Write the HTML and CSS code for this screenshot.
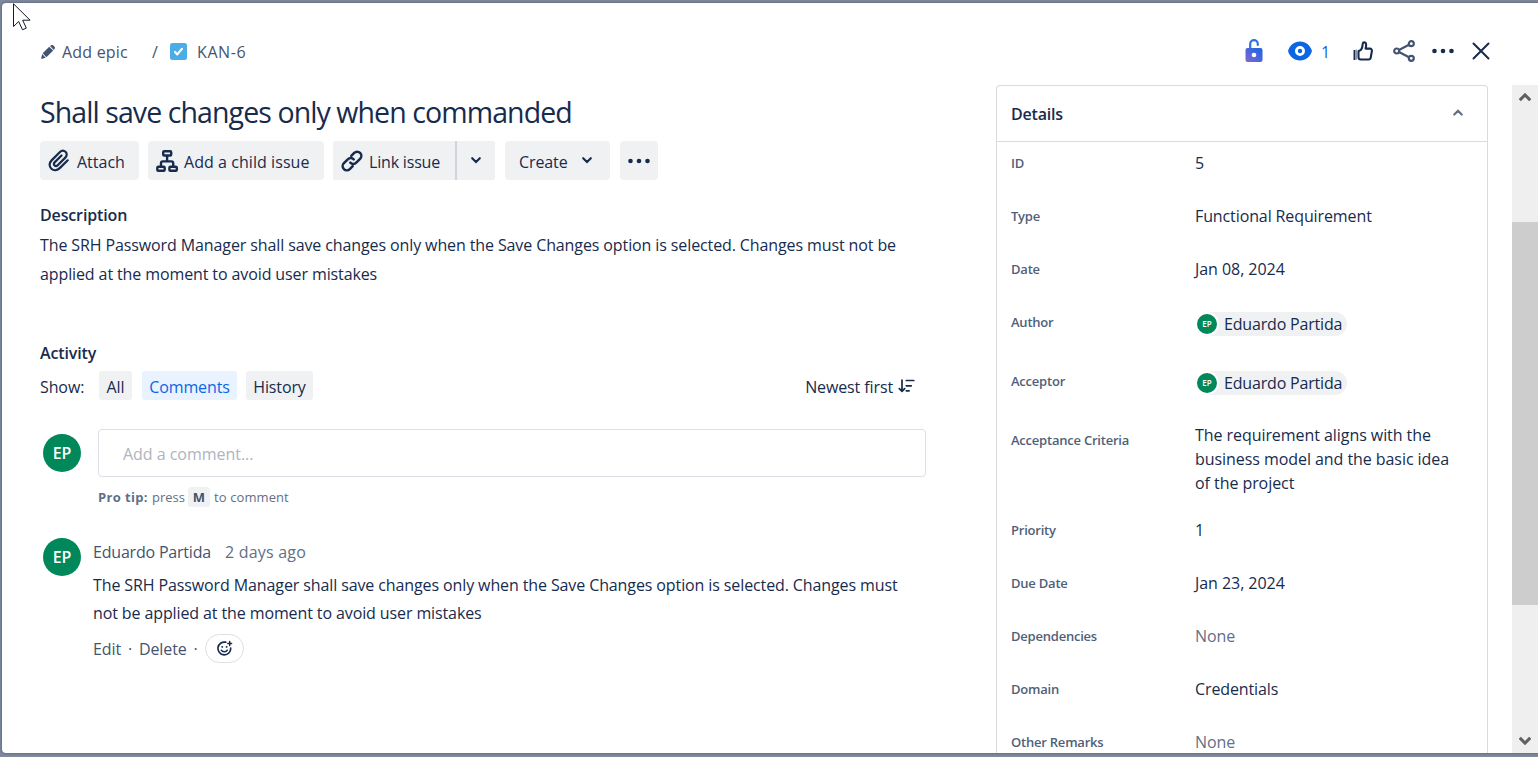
FILE: index.html
```html
<!DOCTYPE html>
<html lang="en">
<head>
<meta charset="utf-8">
<title>KAN-6</title>
<link rel="stylesheet" href="styles.css">
</head>
<body>
<main class="modal">
  <header class="topbar">
    <nav class="crumbs">
      <svg class="pencil" width="14" height="14" viewBox="0 0 14 14"><path fill="#44546f" d="M8.200 1.700 1.700 8.200 5.400 12.200 12.200 5.600zM9 1 10.100.3a1.700 1.700 0 0 1 2.200.1l1.200 1.300a1.700 1.700 0 0 1 0 2.200L12.900 4.900zM1.200 9 .2 12.900a.7.700 0 0 0 .9.900L4.700 12.700z"/></svg>
      <span class="epic">Add epic</span>
      <span class="slash">/</span>
      <svg class="task" width="17" height="17" viewBox="0 0 17 17"><rect width="17" height="17" rx="2.500" fill="#4bade8"/><path d="M5 9 7.300 11.400 12 5.800" fill="none" stroke="#fff" stroke-width="2.200" stroke-linecap="round" stroke-linejoin="round"/></svg>
      <span class="key">KAN-6</span>
    </nav>
    <div class="tools">
      <svg class="lock" width="18" height="24" viewBox="0 0 18 24"><defs><linearGradient id="lg" x1="0" y1="1" x2="1" y2="0"><stop offset="0" stop-color="#8567d3"/><stop offset=".8" stop-color="#2a65e0"/></linearGradient></defs><path d="M5.200 9V5a3.800 3.800 0 0 1 7.600 0V6" fill="none" stroke="#2f6fe6" stroke-width="2.200" stroke-linecap="round"/><rect x=".5" y="9" width="17" height="14" rx="2" fill="url(#lg)"/><circle cx="9" cy="16" r="2.300" fill="#fff"/></svg>
      <svg class="eye" width="24" height="20" viewBox="0 0 24 20"><path fill="#0c66e4" d="M12 .5C6 .5 2 4.500.4 8.700a3.500 3.500 0 0 0 0 2.600C2 15.500 6 19.500 12 19.500s10-4 11.600-8.200a3.500 3.500 0 0 0 0-2.600C22 4.500 18 .5 12 .5z"/><circle cx="12" cy="10" r="3.600" fill="none" stroke="#fff" stroke-width="2.800"/></svg>
      <span class="watch">1</span>
      <svg class="thumb" width="20" height="20" viewBox="0 0 20 20" fill="none" stroke="#172b4d" stroke-width="2.100" stroke-linejoin="round"><path d="M1.500 9v10" stroke-width="1.900"/><path d="M3.400 8.500v10" stroke="#8993a5" stroke-width="1.200"/><path d="M5.500 10.200C7.600 9.400 9 8 9.300 5.800L9.700 2.800C10 .8 12.900.9 13.100 3.200 13.200 4.600 13 6 12.600 7.600h4.300a2 2 0 0 1 2 2.400l-1.200 6.600a2.200 2.200 0 0 1-2.100 1.900H7.700a2.200 2.200 0 0 1-2.200-2.200z"/></svg>
      <svg class="share" width="22" height="22" viewBox="0 0 22 22" fill="none" stroke="#44546f" stroke-width="2.200"><circle cx="3.700" cy="11" r="2.500"/><circle cx="18.300" cy="3.700" r="2.500"/><circle cx="18.300" cy="18.300" r="2.500"/><path d="M6 9.900 16 4.800M6 12.100l10 5.100"/></svg>
      <svg class="more" width="22" height="6" viewBox="0 0 22 6" fill="#172b4d"><circle cx="2.500" cy="3" r="2.300"/><circle cx="11" cy="3" r="2.300"/><circle cx="19.500" cy="3" r="2.300"/></svg>
      <svg class="close" width="18" height="18" viewBox="0 0 18 18"><path d="m1.500 1.500 15 15m0-15-15 15" stroke="#172b4d" stroke-width="2" stroke-linecap="round"/></svg>
    </div>
  </header>
  <div class="body">
    <section class="issue">
      <h1 class="title">Shall save changes only when commanded</h1>
      <div class="actions">
        <div class="btn attach"><svg width="22" height="23" viewBox="0 0 22 23" fill="none" stroke="#172b4d" stroke-width="2.200" stroke-linecap="round"><path d="M19.700 11.300 12 18.900C9.500 21.400 5.900 22 3.400 19.700 .9 17.300 1.100 13.900 3.600 11.400L11.700 3.300c1.700-1.700 4.100-2.100 5.800-.5s1.500 4.100-.2 5.800L9.700 16.200c-.9.900-2.300 1-3.200.2s-.8-2.100.1-3l6.900-6.900"/></svg><span>Attach</span></div>
        <div class="btn child"><svg width="22" height="22" viewBox="0 0 22 22" fill="none" stroke="#172b4d" stroke-width="2.400" stroke-linejoin="round"><rect x="7.200" y="1.300" width="8" height="4.200" rx="1"/><rect x="1.300" y="16.800" width="7.400" height="3.900" rx="1"/><rect x="13.400" y="16.800" width="7.400" height="3.900" rx="1"/><path d="M11.100 6v5M5 16.500v-3.300a1.800 1.800 0 0 1 1.800-1.800h8.600a1.800 1.800 0 0 1 1.800 1.800v3.300"/></svg><span>Add a child issue</span></div>
        <div class="split">
          <div class="btn link"><svg width="22" height="22" viewBox="0 0 22 22" fill="none" stroke="#172b4d" stroke-width="2.500" stroke-linecap="round"><path d="m10.300 5.800 2.900-2.900a4.100 4.100 0 0 1 5.900 5.900l-3.900 3.900a4.100 4.100 0 0 1-5.900-.1"/><path d="m11.700 16.200-2.900 2.900a4.100 4.100 0 0 1-5.900-5.900L6.800 9.300a4.100 4.100 0 0 1 5.900.1"/></svg><span>Link issue</span></div>
          <div class="btn drop"><svg width="10" height="7" viewBox="0 0 10 7"><path d="m1.200 1.200 3.800 3.900 3.800-3.900" fill="none" stroke="#172b4d" stroke-width="2.100" stroke-linecap="round"/></svg></div>
        </div>
        <div class="btn create"><span>Create</span><svg width="10" height="7" viewBox="0 0 10 7"><path d="m1.200 1.200 3.800 3.900 3.800-3.900" fill="none" stroke="#172b4d" stroke-width="2.100" stroke-linecap="round"/></svg></div>
        <div class="btn dots"><svg width="22" height="6" viewBox="0 0 22 6" fill="#172b4d"><circle cx="2.500" cy="3" r="2.300"/><circle cx="11" cy="3" r="2.300"/><circle cx="19.500" cy="3" r="2.300"/></svg></div>
      </div>
      <h2 class="heading">Description</h2>
      <p class="desc"><span>The SRH Password Manager shall save changes only when the Save Changes option is selected. Changes must not be</span><br><span>applied at the moment to avoid user mistakes</span></p>
      <h2 class="heading activity">Activity</h2>
      <div class="filter">
        <span class="show">Show:</span>
        <span class="tab all">All</span>
        <span class="tab comments">Comments</span>
        <span class="tab history">History</span>
        <span class="sort">Newest first</span>
        <svg width="17" height="14" viewBox="0 0 17 14" fill="none" stroke="#172b4d" stroke-width="1.700" stroke-linecap="round" stroke-linejoin="round"><path d="M4 1v11M1.300 9.600 4 12.300l2.700-2.700M8.300 1.500h7.500M8.300 6.800h5M8.300 11.800h2.800"/></svg>
      </div>
      <div class="compose">
        <div class="avatar">EP</div>
        <div class="field"><span>Add a comment...</span></div>
      </div>
      <div class="tip"><b>Pro tip:</b><span class="press">press</span><kbd>M</kbd><span class="to">to comment</span></div>
      <article class="comment">
        <div class="avatar">EP</div>
        <div class="thread">
          <div class="byline"><span class="who">Eduardo Partida</span><span class="when">2 days ago</span></div>
          <p class="text"><span>The SRH Password Manager shall save changes only when the Save Changes option is selected. Changes must</span><br><span>not be applied at the moment to avoid user mistakes</span></p>
          <div class="reply"><span class="edit">Edit</span><i>·</i><span class="delete">Delete</span><i>·</i>
            <span class="emoji"><svg width="17" height="17" viewBox="0 0 17 17" fill="none" stroke="#172b4d" stroke-width="1.700" stroke-linecap="round"><path d="M9.700 2.200A6.400 6.400 0 1 0 14.700 8.200"/><path d="M5.300 10.200c1.200 2.200 4.800 2.200 6 0" stroke-width="1.500"/><path d="M13.700 1.600v3.800M11.800 3.500h3.800" stroke-width="1.500"/><circle cx="6.100" cy="6.900" r=".5" stroke-width="1"/><circle cx="10.400" cy="6.900" r=".5" stroke-width="1"/></svg></span>
          </div>
        </div>
      </article>
    </section>
    <aside class="details">
      <div class="dhead"><h2>Details</h2><svg width="10" height="7" viewBox="0 0 10 7"><path d="M1.300 5.500 5 1.800l3.700 3.700" fill="none" stroke="#626f86" stroke-width="2.200" stroke-linecap="round"/></svg></div>
      <dl>
        <div class="row"><dt>ID</dt><dd>5</dd></div>
        <div class="row"><dt>Type</dt><dd>Functional Requirement</dd></div>
        <div class="row"><dt>Date</dt><dd class="date">Jan 08, 2024</dd></div>
        <div class="row person"><dt>Author</dt><dd><span class="chip"><b>EP</b>Eduardo Partida</span></dd></div>
        <div class="row person"><dt>Acceptor</dt><dd><span class="chip"><b>EP</b>Eduardo Partida</span></dd></div>
        <div class="row criteria"><dt>Acceptance Criteria</dt><dd>The requirement aligns with the<br>business model and the basic idea<br>of the project</dd></div>
        <div class="row"><dt>Priority</dt><dd>1</dd></div>
        <div class="row"><dt>Due Date</dt><dd class="date">Jan 23, 2024</dd></div>
        <div class="row"><dt>Dependencies</dt><dd class="none">None</dd></div>
        <div class="row"><dt>Domain</dt><dd>Credentials</dd></div>
        <div class="row"><dt>Other Remarks</dt><dd class="none">None</dd></div>
      </dl>
    </aside>
    <div class="scroll">
      <svg width="12" height="10" viewBox="0 0 12 10"><path d="M.8 8.200 6 2.800l5.200 5.400" fill="none" stroke="#606060" stroke-width="3"/></svg>
      <div class="thumbbar"></div>
      <svg width="12" height="10" viewBox="0 0 12 10"><path d="M.8 1.800 6 7.200l5.200-5.400" fill="none" stroke="#606060" stroke-width="3"/></svg>
    </div>
  </div>
</main>
<svg class="cursor" width="20" height="29" viewBox="0 0 20 29"><path d="M1.500.8v22.700l5.200-5 3.800 8.300 3.800-1.700-3.600-7.900h7.400z" fill="#fff" stroke="#111827" stroke-width="1"/></svg>
</body>
</html>
```
FILE: styles.css
```css
* { box-sizing: border-box; margin: 0; padding: 0; }
html, body { height: 757px; overflow: hidden; }
body {
  padding: 3px 0 4px 2px;
  background: #7f8a9d;
  font: 16px/24px "Open Sans", "Noto Sans", sans-serif;
  letter-spacing: -0.11px;
  color: #172b4d;
  white-space: nowrap;
}
svg { display: block; flex: none; }
.modal {
  display: flex;
  flex-direction: column;
  height: 750px;
  background: #fff;
  border-radius: 4px 0 0 4px;
  box-shadow: 0 0 3px rgba(9, 30, 66, .5);
  overflow: hidden;
}
.topbar { display: flex; justify-content: space-between; height: 82px; padding: 36px 48px 0 39px; }
.crumbs, .tools { display: flex; align-items: center; height: 25px; color: #44546f; }
.tools { height: 24px; }
.epic { margin-left: 7px; width: 90px; letter-spacing: 0.2px; }
.crumbs span { padding-top: 1px; }
.slash { width: 18px; }
.key { margin-left: 10px; letter-spacing: 0.6px; }
.eye { margin-left: 25px; }
.watch { width: 9px; margin-left: 9px; color: #0c66e4; padding-top: 1px; }
.thumb { margin-left: 23px; }
.share { margin-left: 20px; }
.more { margin-left: 17px; }
.close { margin-left: 18px; }
.body { display: flex; flex: 1; min-height: 0; }
.issue { width: 924px; padding-left: 38px; }
.title { margin-top: 7px; font-size: 28.500px; line-height: 40px; font-weight: 400; letter-spacing: -0.91px; }
.actions { display: flex; height: 39px; margin-top: 9px; }
.btn { display: flex; align-items: center; background: #f0f1f3; border-radius: 4px; }
.btn span { padding-top: 2px; }
.attach { width: 99px; margin-right: 9px; padding-left: 8px; gap: 7px; letter-spacing: 0; }
.child { width: 176px; margin-right: 9px; padding-left: 8px; gap: 6px; letter-spacing: 0.06px; }
.split { display: flex; gap: 2px; width: 162px; margin-right: 10px; background: #d0d4db; border-radius: 4px; }
.link { width: 122px; padding-left: 8px; gap: 6px; border-radius: 4px 0 0 4px; letter-spacing: -0.18px; }
.drop { flex: 1; justify-content: center; border-radius: 0 4px 4px 0; }
.create { width: 105px; margin-right: 10px; padding: 0 18px 0 14px; justify-content: space-between; }
.dots { width: 38px; justify-content: center; }
.heading { margin-top: 23px; font-size: 16px; line-height: 24px; font-weight: 600; letter-spacing: -0.14px; }
.desc { margin-top: 4px; line-height: 28.500px; }
.activity { margin-top: 53px; }
.filter { display: flex; align-items: center; height: 29px; margin-top: 6px; padding-right: 9px; }
.show { width: 59px; padding-top: 2px; }
.tab { height: 29px; line-height: 32px; border-radius: 3px; background: #f0f1f3; text-align: center; }
.all { width: 33px; }
.comments { width: 95px; margin: 0 9px 0 10px; background: #e9f2ff; color: #0c66e4; }
.history { width: 67px; }
.sort { margin: 0 5px 0 auto; padding-top: 2px; }
.filter svg { margin-right: 2px; }
.compose { display: flex; align-items: center; margin-top: 29px; padding-left: 3px; gap: 17px; }
.avatar {
  flex: none; width: 38px; height: 38px; border-radius: 50%; background: #00875a; color: #fff;
  font-size: 16px; line-height: 38px; font-weight: 600; text-align: center;
}
.field { flex: 1; height: 48px; padding: 12px 24px; border: 1px solid #dcdfe4; border-radius: 4px; color: #aeb4c0; letter-spacing: -0.03px; }
.tip { display: flex; align-items: center; height: 20px; margin: 10px 0 0 58px; font-size: 13px; color: #626f86; letter-spacing: 0; }
.tip b { width: 54px; letter-spacing: 0.35px; }
.press { width: 36px; }
.to { letter-spacing: 0.1px; }
kbd { width: 22px; margin-right: 4px; border-radius: 3px; background: #f0f1f3; font: 700 13px/20px "Open Sans", sans-serif; text-align: center; color: #44546f; }
.comment { display: flex; gap: 12px; margin-top: 31px; padding-left: 3px; }
.thread { padding-top: 2px; }
.byline { color: #44546f; }
.who { display: inline-block; width: 132px; letter-spacing: -0.2px; }
.when { color: #626f86; letter-spacing: 0.2px; }
.text { margin-top: 7px; line-height: 28px; }
.reply { display: flex; align-items: center; height: 29px; margin-top: 7px; color: #44546f; }
.reply i { width: 18px; text-align: center; font-style: normal; }
.emoji { display: flex; align-items: center; justify-content: center; width: 39px; height: 29px; border: 1px solid #dcdfe4; border-radius: 15px; }
.details { width: 492px; margin-left: 70px; border: 1px solid #d9dbdf; border-bottom: 0; border-radius: 4px 4px 0 0; overflow: hidden; }
.dhead { display: flex; align-items: center; justify-content: space-between; height: 56px; padding: 0 24px 0 14px; border-bottom: 1px solid #d9dbdf; }
.dhead h2 { font-size: 16px; font-weight: 600; letter-spacing: -0.2px; }
.dhead svg { margin-top: -2px; }
.row { display: flex; height: 53px; padding: 9px 0 0 14px; }
.row dt { width: 184px; font-size: 13px; font-weight: 600; color: #505f79; letter-spacing: -0.22px; }
.date { letter-spacing: -0.05px; }
.none { color: #626f86; }
.person { height: 59px; padding-top: 9px; }
.person dd { margin-top: 2px; }
.criteria { height: 90px; }
.criteria dd { margin-top: -5px; letter-spacing: -0.06px; }
.chip { display: flex; width: 152px; background: #f0f1f3; border-radius: 12px; letter-spacing: -0.18px; }
.chip b {
  width: 24px; height: 24px; margin-right: 5px; border: 2.500px solid #fff; border-radius: 50%;
  background: #00875a; color: #fff; font-size: 8px; line-height: 19px; font-weight: 600; text-align: center; letter-spacing: 0;
}
.scroll { display: flex; flex-direction: column; align-items: center; justify-content: space-between; width: 26px; margin-left: 24px; padding: 7px 0; background: #efefef; }
.thumbbar { width: 26px; height: 383px; margin-bottom: 12px; background: #cdcdcd; }
.cursor { position: absolute; left: 12px; top: 3px; }
```
